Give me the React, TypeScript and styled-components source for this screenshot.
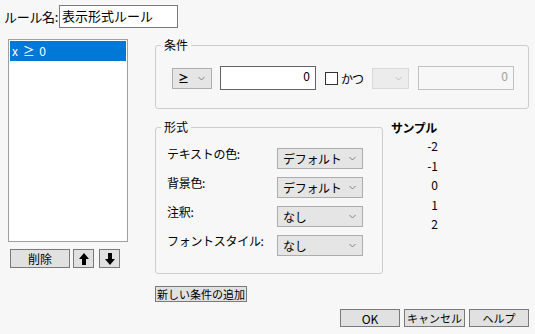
import React from "react";
import styled, { createGlobalStyle } from "styled-components";

const GlobalStyle = createGlobalStyle`
  html, body {
    margin: 0;
    padding: 0;
    background: #f7f7f7;
  }
  body {
    font-family: "Noto Sans CJK JP", "Noto Sans", sans-serif;
    font-size: 12px;
    color: #000;
  }
`;

const Window = styled.div`
  width: 535px;
  height: 334px;
  box-sizing: border-box;
  padding: 5px 6px 0 4px;
  display: flex;
  flex-direction: column;
  overflow: hidden;
`;

const NameRow = styled.div`
  display: flex;
  align-items: center;
  height: 23px;
  font-size: 13px;
`;

const NameLabel = styled.span`
  width: 55px;
  white-space: nowrap;
  letter-spacing: -0.3px;
`;

const NameInput = styled.div`
  width: 119px;
  height: 23px;
  box-sizing: border-box;
  border: 1px solid #7a7a7a;
  background: #fff;
  padding: 0 2px;
  line-height: 20px;
  font-size: 13px;
`;

const MainRow = styled.div`
  display: flex;
  margin-top: 10px;
  padding-left: 4px;
  gap: 27px;
`;

const LeftColumn = styled.div`
  display: flex;
  flex-direction: column;
  width: 120px;
  padding-top: 1px;
`;

const RuleList = styled.div`
  height: 203px;
  box-sizing: border-box;
  border: 1px solid #a0a0a0;
  background: #fff;
  padding: 1px;
`;

const ListItem = styled.div<{ $selected?: boolean }>`
  height: 20px;
  line-height: 20px;
  padding-left: 2px;
  word-spacing: 2px;
  background: ${(p) => (p.$selected ? "#0078d7" : "transparent")};
  color: ${(p) => (p.$selected ? "#fff" : "#000")};
`;

const ListButtons = styled.div`
  display: flex;
  margin-top: 7px;
  padding-left: 2px;
  gap: 3px;
`;

const Button = styled.button<{ $w: number; $h?: number }>`
  width: ${(p) => p.$w}px;
  height: ${(p) => p.$h ?? 19}px;
  box-sizing: border-box;
  border: 1px solid #7a7a7a;
  background: #e1e1e1;
  font-family: inherit;
  font-size: 11px;
  color: #000;
  padding: 0;
  margin: 0;
  display: flex;
  align-items: center;
  justify-content: center;
  white-space: nowrap;
  overflow: hidden;
`;

const RightColumn = styled.div`
  display: flex;
  flex-direction: column;
`;

const Group = styled.fieldset<{ $w: number }>`
  width: ${(p) => p.$w}px;
  box-sizing: border-box;
  margin: 0;
  padding: 0;
  border: 1px solid #cdcdcd;
  border-radius: 3px;
  min-inline-size: 0;
`;

const Legend = styled.legend`
  margin-left: 5px;
  padding: 0 3px;
  line-height: 14px;
  font-size: 12px;
`;

const ConditionBody = styled.div`
  display: flex;
  align-items: center;
  padding: 14px 0 18px 16px;
`;

const Select = styled.div<{ $w: number; $disabled?: boolean }>`
  width: ${(p) => p.$w}px;
  height: 21px;
  box-sizing: border-box;
  border: 1px solid ${(p) => (p.$disabled ? "#d9d9d9" : "#adadad")};
  background: ${(p) => (p.$disabled ? "#ececec" : "#e5e5e5")};
  display: flex;
  align-items: center;
  justify-content: space-between;
  padding: 0 6px 0 5px;
  line-height: 19px;
  white-space: nowrap;
  letter-spacing: -0.3px;
`;

const OperatorGlyph = styled.span`
  font-weight: bold;
  font-size: 11px;
`;

const Chevron = ({ color = "#808080" }: { color?: string }) => (
  <svg width="7" height="5" viewBox="0 0 7 5">
    <path d="M0.5 1 L3.5 4 L6.5 1" fill="none" stroke={color} strokeWidth="1" />
  </svg>
);

const ValueInput = styled.div<{ $disabled?: boolean }>`
  width: 96px;
  height: 24px;
  box-sizing: border-box;
  border: 1px solid ${(p) => (p.$disabled ? "#c2c2c2" : "#646464")};
  background: ${(p) => (p.$disabled ? "#f7f7f7" : "#fff")};
  color: ${(p) => (p.$disabled ? "#a0a0a0" : "#000")};
  text-align: right;
  padding: 0 5px;
  line-height: 17px;
`;

const CheckLabel = styled.label`
  display: flex;
  align-items: center;
  gap: 3px;
  margin: 0 9px 0 9px;
  font-size: 12px;
  letter-spacing: -1px;
`;

const CheckBox = styled.span`
  width: 13px;
  height: 13px;
  box-sizing: border-box;
  border: 1px solid #333;
  background: #fff;
`;

const FormatRow = styled.div`
  display: flex;
  margin-top: 11px;
  gap: 8px;
`;

const FormatBody = styled.div`
  display: grid;
  grid-template-columns: 110px 86px;
  row-gap: 8px;
  padding: 14px 0 17px 11px;
`;

const FieldLabel = styled.span`
  line-height: 16px;
  margin-top: -2px;
  white-space: nowrap;
  letter-spacing: -0.3px;
`;

const Sample = styled.div`
  width: 47px;
  display: flex;
  flex-direction: column;
`;

const SampleTitle = styled.div`
  font-weight: bold;
  line-height: 16px;
  white-space: nowrap;
  letter-spacing: -0.5px;
`;

const SampleValue = styled.div`
  text-align: right;
  line-height: 19.5px;
  &:first-of-type {
    margin-top: 1px;
  }
`;

const AddRow = styled.div`
  margin-top: 12px;
`;

const DialogButtons = styled.div`
  display: flex;
  justify-content: flex-end;
  gap: 4px;
  margin-top: 7px;
`;

const Arrow = ({ down }: { down?: boolean }) => (
  <svg width="10" height="12" viewBox="0 0 10 12" style={down ? { transform: "rotate(180deg)" } : undefined}>
    <polygon points="5,0 10,6 7,6 7,12 3,12 3,6 0,6" fill="#000" />
  </svg>
);

const formatFields = [
  { label: "テキストの色:", value: "デフォルト" },
  { label: "背景色:", value: "デフォルト" },
  { label: "注釈:", value: "なし" },
  { label: "フォントスタイル:", value: "なし" },
];

const samples = ["-2", "-1", "0", "1", "2"];

export default function App() {
  return (
    <>
      <GlobalStyle />
      <Window>
        <NameRow>
          <NameLabel>ルール名:</NameLabel>
          <NameInput>表示形式ルール</NameInput>
        </NameRow>

        <MainRow>
          <LeftColumn>
            <RuleList>
              <ListItem $selected>x ≥ 0</ListItem>
            </RuleList>
            <ListButtons>
              <Button $w={60} style={{ fontSize: 12 }}>削除</Button>
              <Button $w={21}>
                <Arrow />
              </Button>
              <Button $w={21} style={{ marginLeft: 2 }}>
                <Arrow down />
              </Button>
            </ListButtons>
          </LeftColumn>

          <RightColumn>
            <Group $w={374}>
              <Legend>条件</Legend>
              <ConditionBody>
                <Select $w={40}>
                  <OperatorGlyph>≥</OperatorGlyph>
                  <Chevron />
                </Select>
                <ValueInput style={{ marginLeft: 8 }}>0</ValueInput>
                <CheckLabel>
                  <CheckBox />
                  かつ
                </CheckLabel>
                <Select $w={37} $disabled>
                  <span />
                  <Chevron color="#c0c0c0" />
                </Select>
                <ValueInput $disabled style={{ marginLeft: 9 }}>
                  0
                </ValueInput>
              </ConditionBody>
            </Group>

            <FormatRow>
              <Group $w={228}>
                <Legend>形式</Legend>
                <FormatBody>
                  {formatFields.map((f) => (
                    <React.Fragment key={f.label}>
                      <FieldLabel>{f.label}</FieldLabel>
                      <Select $w={86}>
                        <span>{f.value}</span>
                        <Chevron />
                      </Select>
                    </React.Fragment>
                  ))}
                </FormatBody>
              </Group>
              <Sample>
                <SampleTitle>サンプル</SampleTitle>
                {samples.map((s) => (
                  <SampleValue key={s}>{s}</SampleValue>
                ))}
              </Sample>
            </FormatRow>

            <AddRow>
              <Button $w={92} $h={16}>
                新しい条件の追加
              </Button>
            </AddRow>
          </RightColumn>
        </MainRow>

        <DialogButtons>
          <Button $w={60} $h={18} style={{ fontSize: 12 }}>
            OK
          </Button>
          <Button $w={61} $h={18}>
            キャンセル
          </Button>
          <Button $w={60} $h={18}>
            ヘルプ
          </Button>
        </DialogButtons>
      </Window>
    </>
  );
}
